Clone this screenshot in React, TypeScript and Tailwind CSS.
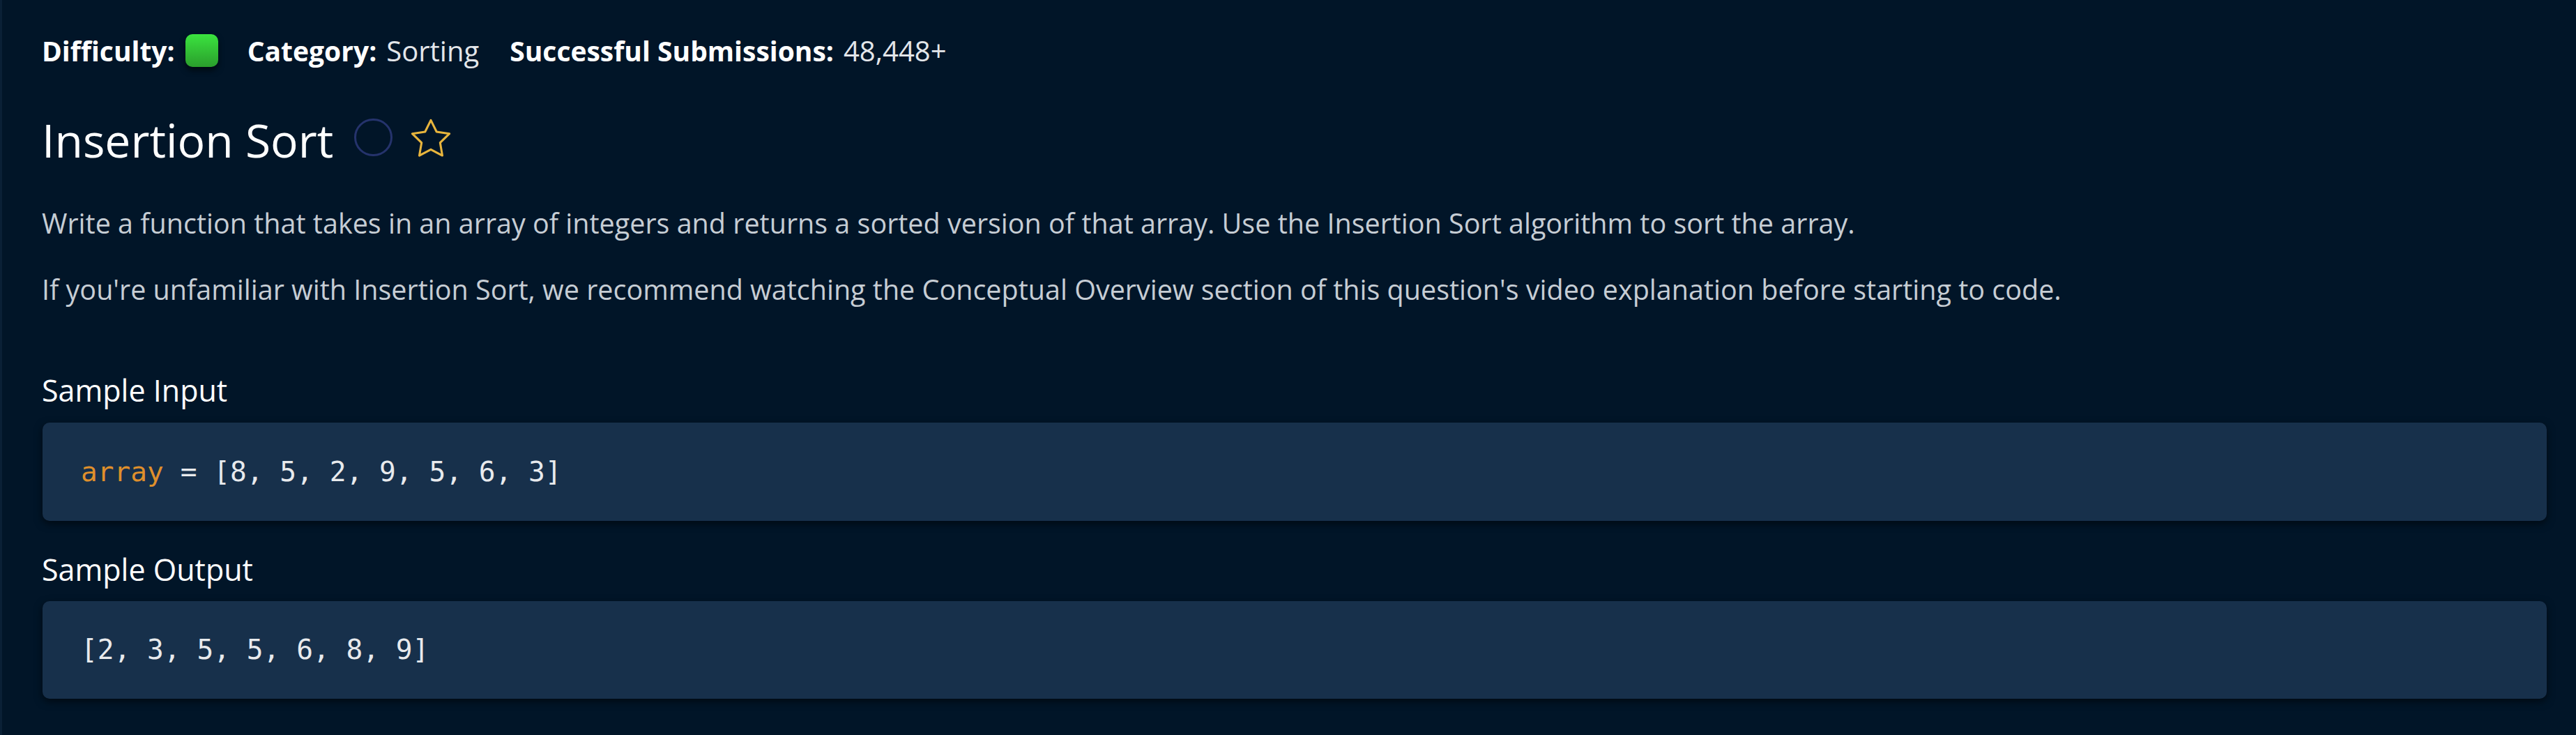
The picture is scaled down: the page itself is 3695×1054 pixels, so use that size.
import React from "react";

const sans = { fontFamily: '"Open Sans", "Noto Sans", sans-serif' };
const mono = { fontFamily: '"DejaVu Sans Mono", "Liberation Mono", monospace' };

function Star() {
  return (
    <svg width="64" height="64" viewBox="0 0 24 24" fill="none" stroke="#e8b53d" strokeWidth="1.15" strokeLinejoin="round">
      <polygon points="12,2 15.09,8.26 22,9.27 17,14.14 18.18,21.02 12,17.77 5.82,21.02 7,14.14 2,9.27 8.91,8.26" />
    </svg>
  );
}

export default function App() {
  return (
    <div className="min-h-[1054px] w-full bg-[#011528] border-l-[3px] border-[#0a2036] pl-[57px] pr-[42px] pt-[49px] text-white" style={sans}>
      <div className="flex items-center h-[47px] text-[39px] leading-[47px]">
        <span className="font-bold">Difficulty:</span>
        <span className="ml-[15px] w-[47px] h-[47px] rounded-[10px] bg-gradient-to-b from-[#3be43f] to-[#2a9e2c] shadow-[0_5px_8px_rgba(0,0,0,0.6)]" />
        <span className="ml-[42px] font-bold">Category:</span>
        <span className="ml-[14px] text-[#e3e6ea] text-[40px]">Sorting</span>
        <span className="ml-[44px] font-bold">Successful Submissions:</span>
        <span className="ml-[14px] text-[#e3e6ea] text-[40px]">48,448+</span>
      </div>

      <div className="mt-[64px] flex items-center h-[80px]">
        <h1 className="text-[66px] leading-[80px] font-normal">Insertion Sort</h1>
        <span className="ml-[30px] mt-[-6px] w-[55px] h-[54px] rounded-full border-[3px] border-[#25336c]" />
        <span className="ml-[23px] mt-[-2px] flex items-center">
          <Star />
        </span>
      </div>

      <p className="mt-[52px] text-[39.5px] leading-[57px] text-[#c6cdd4]">
        Write a function that takes in an array of integers and returns a sorted version of that array. Use the Insertion Sort algorithm to sort the array.
      </p>
      <p className="mt-[38px] text-[39.5px] leading-[57px] text-[#c6cdd4]">
        If you're unfamiliar with Insertion Sort, we recommend watching the Conceptual Overview section of this question's video explanation before starting to code.
      </p>

      <h3 className="mt-[90px] text-[43px] leading-[52px] font-normal text-white">Sample Input</h3>
      <div className="mt-[20px] ml-[1px] h-[141px] rounded-[10px] bg-[#17304b] shadow-[0_4px_12px_rgba(0,0,0,0.55)] flex items-center pl-[55px] text-[39.5px] text-[#e8eaed]" style={mono}>
        <span className="text-[#df8f2c]">array</span>
        <span className="whitespace-pre"> = [8, 5, 2, 9, 5, 6, 3]</span>
      </div>

      <h3 className="mt-[44px] text-[43px] leading-[52px] font-normal text-white">Sample Output</h3>
      <div className="mt-[19px] ml-[1px] h-[140px] rounded-[10px] bg-[#17304b] shadow-[0_4px_12px_rgba(0,0,0,0.55)] flex items-center pl-[55px] text-[39.5px] text-[#e8eaed]" style={mono}>
        <span className="whitespace-pre">[2, 3, 5, 5, 6, 8, 9]</span>
      </div>
    </div>
  );
}
